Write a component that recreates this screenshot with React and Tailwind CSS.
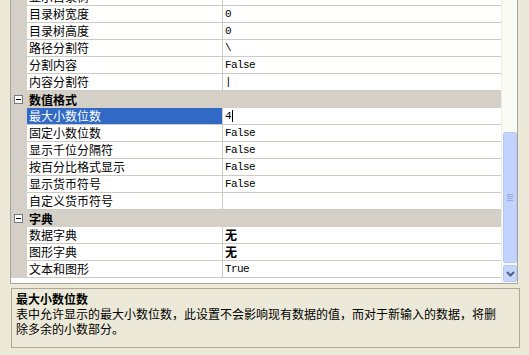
import React from "react";

const cjk = { fontFamily: '"Noto Sans CJK SC", "Liberation Sans", sans-serif' };
const mono = { fontFamily: '"Liberation Mono", "Noto Sans CJK SC", monospace' };

function Row({ name, value, bold, selected, caret }) {
  return (
    <div className="flex h-[17px]">
      <div className="w-[16px] shrink-0 bg-[#d4d0c8]" />
      <div
        className={`w-[195px] shrink-0 border-b border-[#cfcbc3] pl-[2px] flex items-center text-[12px] leading-none whitespace-nowrap overflow-hidden ${
          selected ? "bg-[#316ac5] text-white" : "text-black"
        }`}
        style={cjk}
      >
        {name}
      </div>
      <div className="w-px shrink-0 bg-[#cfcbc3]" />
      <div className="flex-1 border-b border-[#cfcbc3] pl-[2px] flex items-center text-black">
        {bold ? (
          <span className="text-[12px] font-bold leading-none" style={cjk}>
            {value}
          </span>
        ) : (
          <span className="text-[11px] tracking-[-0.6px] leading-none" style={mono}>
            {value}
          </span>
        )}
        {caret && <span className="ml-[1px] w-px h-[12px] bg-black" />}
      </div>
    </div>
  );
}

function Category({ name }) {
  return (
    <div className="flex h-[17px] bg-[#d4d0c8] items-center">
      <div className="w-[16px] shrink-0 flex items-center justify-end pr-[4px]">
        <div className="w-[9px] h-[9px] border border-[#7a7a7a] bg-white flex items-center justify-center">
          <div className="w-[5px] h-px bg-black" />
        </div>
      </div>
      <div className="pl-[2px] text-[12px] font-bold leading-none text-black" style={cjk}>
        {name}
      </div>
    </div>
  );
}

export default function App() {
  return (
    <div className="w-[529px] h-[355px] bg-[#ece9d8] overflow-hidden">
      <div className="ml-[10px] w-[508px] mt-[-11px] h-[295px] flex border-l border-r border-b border-[#a7a69a] bg-white">
        <div className="w-[490px] flex flex-col">
          <Row name="显示目录树" value="" />
          <Row name="目录树宽度" value="0" />
          <Row name="目录树高度" value="0" />
          <Row name="路径分割符" value="\" />
          <Row name="分割内容" value="False" />
          <Row name="内容分割符" value="|" />
          <Category name="数值格式" />
          <Row name="最大小数位数" value="4" selected caret />
          <Row name="固定小数位数" value="False" />
          <Row name="显示千位分隔符" value="False" />
          <Row name="按百分比格式显示" value="False" />
          <Row name="显示货币符号" value="False" />
          <Row name="自定义货币符号" value="" />
          <Category name="字典" />
          <Row name="数据字典" value="无" bold />
          <Row name="图形字典" value="无" bold />
          <Row name="文本和图形" value="True" />
        </div>
        <div className="w-[16px] flex flex-col bg-[#fbfbf6] border-l border-[#f0efe6]">
          <div className="flex-1" />
          <div className="ml-[1px] w-[14px] h-[131px] rounded-[2px] border border-[#b4c8f6] bg-[#c3d3fd] flex flex-col items-center justify-center gap-[1px]">
            <div className="w-[6px] h-px bg-[#8ea8e8]" />
            <div className="w-[6px] h-px bg-[#8ea8e8]" />
            <div className="w-[6px] h-px bg-[#8ea8e8]" />
            <div className="w-[6px] h-px bg-[#8ea8e8]" />
          </div>
          <div className="ml-[1px] mt-[2px] mb-[1px] w-[14px] h-[17px] rounded-[2px] border border-[#b4c8f6] bg-[#c6d6fc] flex items-center justify-center">
            <svg width="9" height="6" viewBox="0 0 9 6">
              <path d="M1 1 L4.5 4.5 L8 1" stroke="#4d6185" strokeWidth="2" fill="none" />
            </svg>
          </div>
        </div>
      </div>
      <div className="ml-[11px] mt-[4px] w-[509px] h-[60px] border border-[#aca899] bg-[#ece9d8] pl-[4px] pt-[2px] text-[12px] leading-[15px] text-black" style={cjk}>
        <div className="font-bold">最大小数位数</div>
        <div>
          表中允许显示的最大小数位数，此设置不会影响现有数据的值，而对于新输入的数据，将删
          <br />
          除多余的小数部分。
        </div>
      </div>
    </div>
  );
}
